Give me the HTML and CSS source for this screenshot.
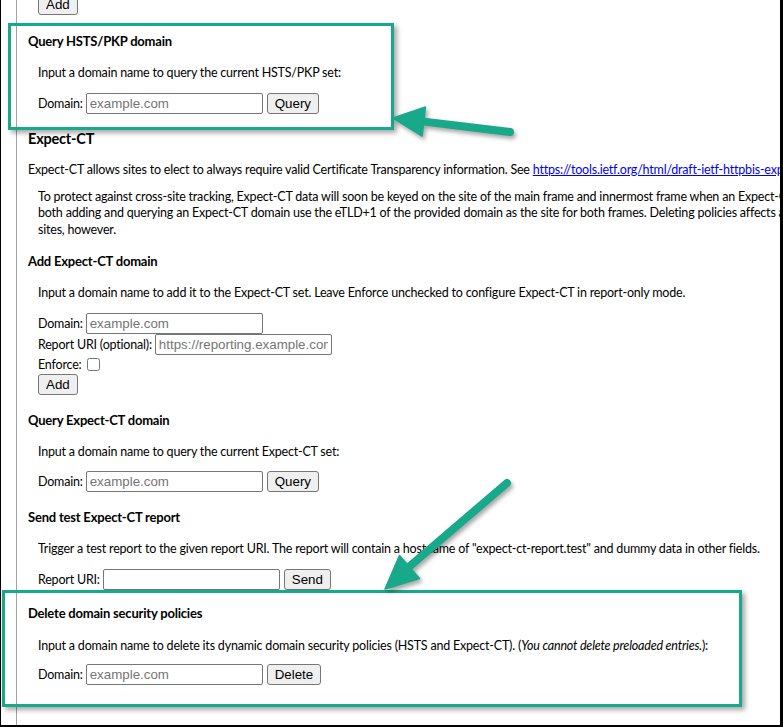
FILE: index.html
```html
<!DOCTYPE html>
<html>
<head>
<meta charset="utf-8">
<title>HSTS / Expect-CT</title>
<link rel="stylesheet" href="styles.css">
</head>
<body>
<div class="frame">
  <div class="page">
    <div class="row top"><button class="btn">Add</button></div>

    <h3 class="first">Query HSTS/PKP domain</h3>
    <p class="note">Input a domain name to query the current HSTS/PKP set:</p>
    <div class="row"><label>Domain:</label><input class="field" type="text" placeholder="example.com"><button class="btn">Query</button></div>

    <h2>Expect-CT</h2>
    <p class="lead">Expect-CT allows sites to elect to always require valid Certificate Transparency information. See <a href="#">https://tools.ietf.org/html/draft-ietf-httpbis-expect-ct</a> for more information.</p>
    <p class="note multi">To protect against cross-site tracking, Expect-CT data will soon be keyed on the site of the main frame and innermost frame when an Expect-CT header is received. For testing purposes,<br>both adding and querying an Expect-CT domain use the eTLD+1 of the provided domain as the site for both frames. Deleting policies affects all<br>sites, however.</p>

    <h3>Add Expect-CT domain</h3>
    <p class="note">Input a domain name to add it to the Expect-CT set. Leave Enforce unchecked to configure Expect-CT in report-only mode.</p>
    <div class="row"><label>Domain:</label><input class="field" type="text" placeholder="example.com"></div>
    <div class="row"><label>Report URI (optional):</label><input class="field" type="text" placeholder="https://reporting.example.com"></div>
    <div class="row check"><label>Enforce:</label><input class="box" type="checkbox"></div>
    <div class="row"><button class="btn">Add</button></div>

    <h3>Query Expect-CT domain</h3>
    <p class="note">Input a domain name to query the current Expect-CT set:</p>
    <div class="row"><label>Domain:</label><input class="field" type="text" placeholder="example.com"><button class="btn">Query</button></div>

    <h3>Send test Expect-CT report</h3>
    <p class="note">Trigger a test report to the given report URI. The report will contain a hostname of "expect-ct-report.test" and dummy data in other fields.</p>
    <div class="row"><label>Report URI:</label><input class="field" type="text"><button class="btn">Send</button></div>

    <h3 class="del">Delete domain security policies</h3>
    <p class="note del-note">Input a domain name to delete its dynamic domain security policies (HSTS and Expect-CT). (<i>You cannot delete preloaded entries.</i>):</p>
    <div class="row"><label>Domain:</label><input class="field" type="text" placeholder="example.com"><button class="btn">Delete</button></div>
  </div>

  <div class="callout c1"></div>
  <div class="callout c2"></div>

  <svg class="arrows" width="783" height="727" viewBox="0 0 783 727">
    <g class="arrow">
      <line x1="510" y1="132" x2="422" y2="121.4" />
      <polygon points="393,118 425.5,107 422.1,136" />
    </g>
    <g class="arrow">
      <line x1="507" y1="483" x2="410" y2="566" />
      <polygon points="385,589 419.5,578.5 399.5,555.5" />
    </g>
  </svg>
</div>
</body>
</html>
```

FILE: styles.css
```css
* { box-sizing: border-box; }

html, body {
  margin: 0;
  padding: 0;
  background: #fff;
}

body {
  font-family: Lato, "Segoe UI", "Noto Sans", sans-serif;
  font-size: 12.5px;
  letter-spacing: -0.2px;
  color: #000;
}

.frame {
  position: relative;
  width: 783px;
  height: 727px;
  overflow: hidden;
  background: #fff;
  border-left: 1px solid #000;
  border-right: 3px solid #000;
  border-bottom: 2px solid #000;
}

.page {
  margin: -6px 0 0 15px;
  padding-left: 11px;
  border-left: 1px solid #a3a3a3;
  min-height: 760px;
  white-space: nowrap;
}

h2 {
  margin: 15px 0 14px;
  font-size: 14.5px;
  line-height: 19px;
  font-weight: 700;
}

h3 {
  margin: 17px 0 15px;
  font-size: 13px;
  line-height: 17px;
  font-weight: 700;
}

h3.first { margin-top: 18px; }

p {
  margin: 0;
  line-height: 16.5px;
}

.lead { margin-bottom: 10.5px; }

.note { margin: 0 0 11px 10px; }

.multi { margin-bottom: 0; }
.multi + h3 { margin-top: 15px; }

h3.del { margin: 15px 0 16px; }
.del-note { margin-bottom: 10px; }

a {
  color: #0000ee;
  text-decoration: underline;
}

.row {
  display: flex;
  align-items: center;
  height: 21px;
  margin-left: 10px;
}

.row.check { height: 19px; }

.row label { margin-right: 3px; }

.field {
  width: 177px;
  height: 21px;
  margin: 0;
  padding: 1px 3px;
  border: 1px solid #767676;
  border-radius: 2px;
  background: #fff;
  font-family: "Liberation Sans", Arial, sans-serif;
  font-size: 13.33px;
  letter-spacing: 0;
  color: #000;
}

.field::placeholder { color: #757575; }

.btn {
  height: 21px;
  margin: 0 0 0 4px;
  padding: 0 7px;
  border: 1px solid #767676;
  border-radius: 3px;
  background: #efefef;
  font-family: "Liberation Sans", Arial, sans-serif;
  font-size: 13.33px;
  letter-spacing: 0;
  color: #000;
}

.row > .btn:first-child { margin-left: 0; }

.box {
  width: 13px;
  height: 13px;
  margin: 0 0 0 3px;
}

.callout {
  position: absolute;
  border: 3px solid #17a98a;
  box-shadow: 3px 3px 5px rgba(0, 0, 0, 0.35);
}

.c1 { left: 7px; top: 23px; width: 386px; height: 107px; }
.c2 { left: 1px; top: 590px; width: 740px; height: 117px; }

.arrows {
  position: absolute;
  left: -1px;
  top: 0;
  filter: drop-shadow(2px 3px 2px rgba(0, 0, 0, 0.35));
}

.arrow line {
  stroke: #17a98a;
  stroke-width: 8;
  stroke-linecap: round;
}

.arrow polygon {
  fill: #17a98a;
  stroke: #17a98a;
  stroke-width: 1.5;
  stroke-linejoin: round;
}
```
